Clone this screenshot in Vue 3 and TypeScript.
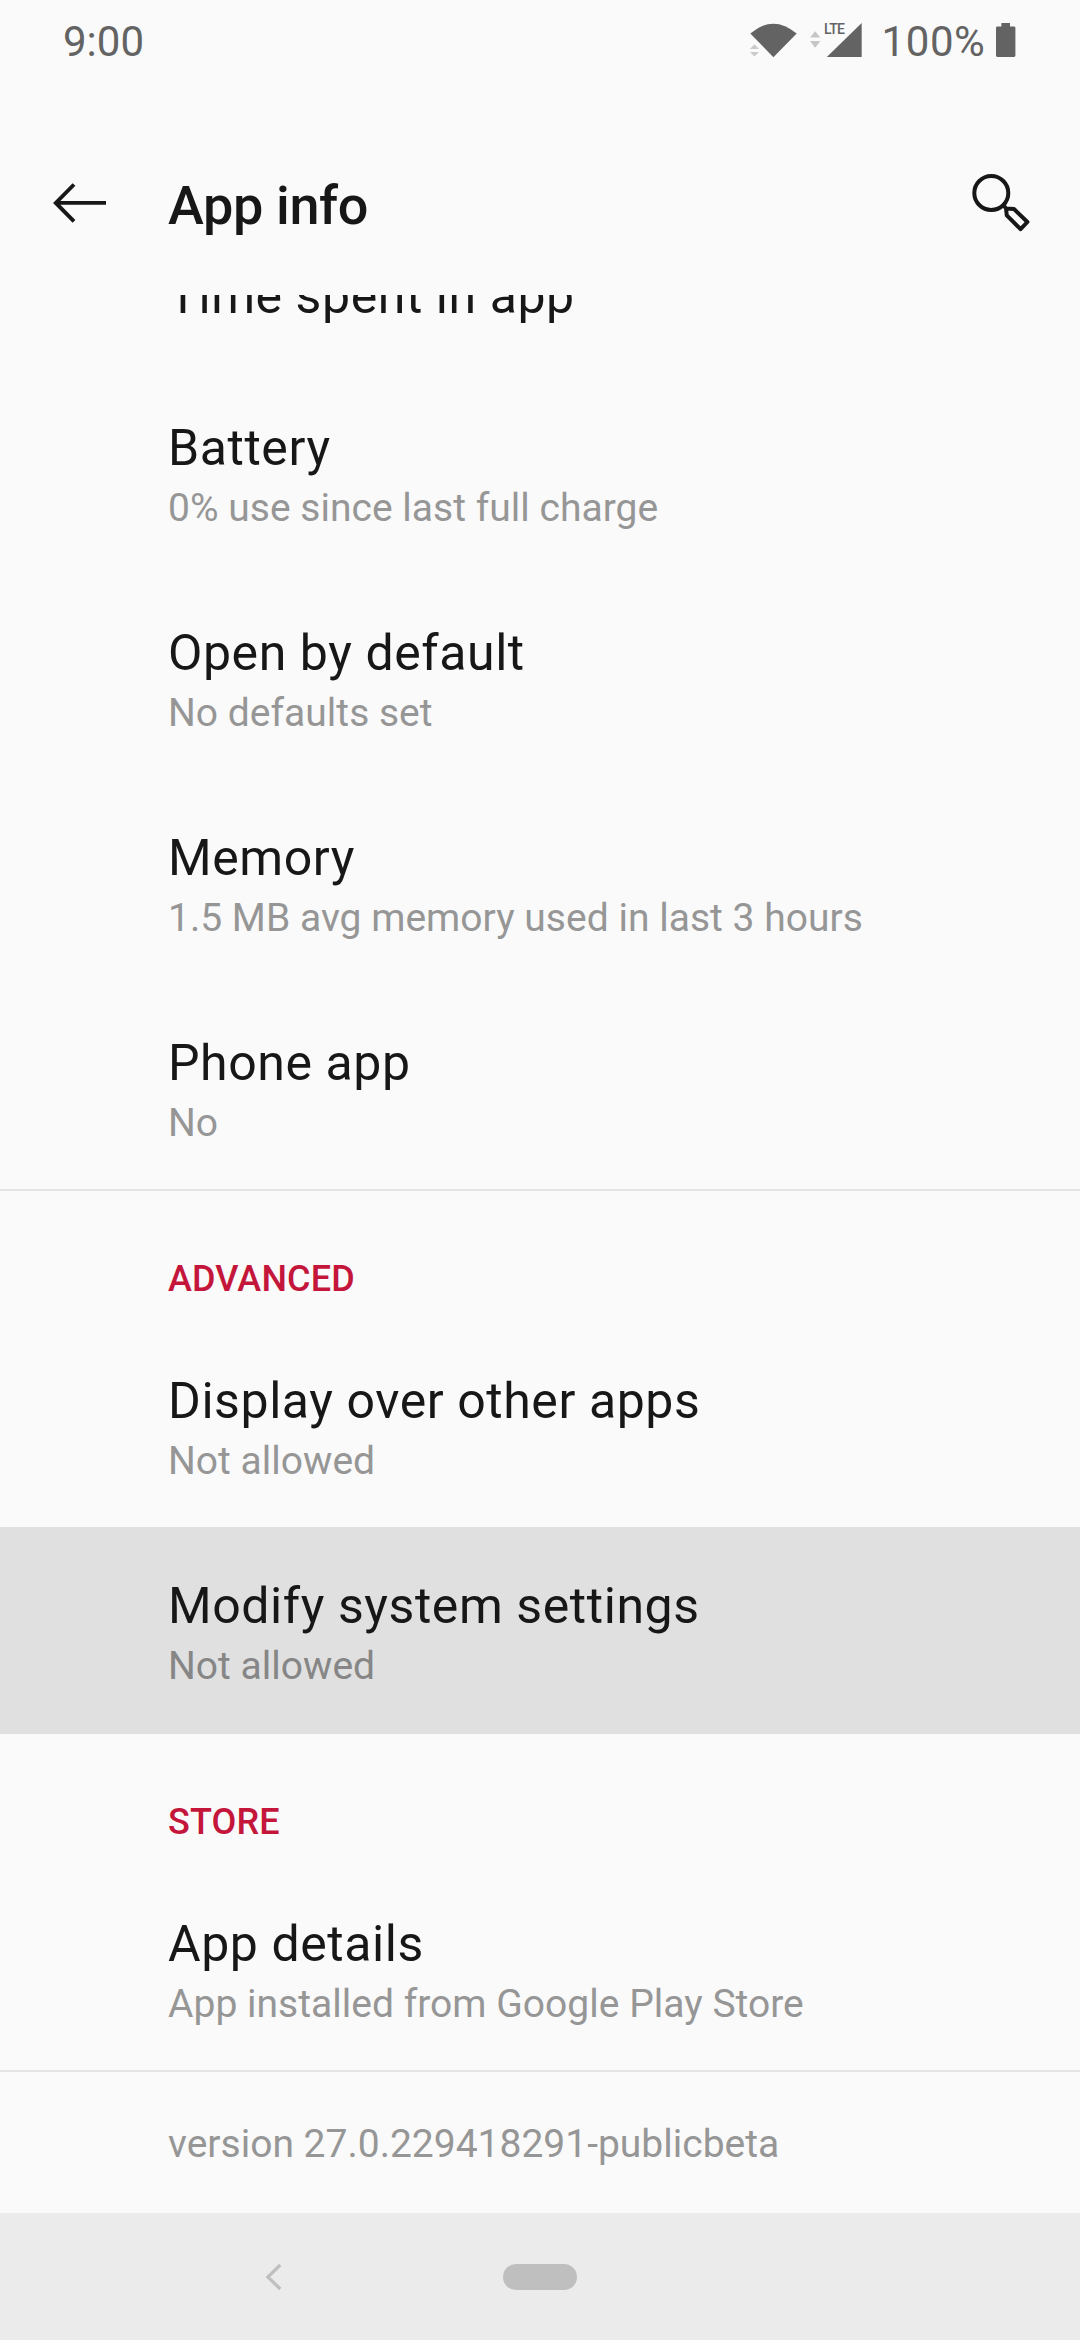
<script setup lang="ts">
interface Preference {
  title: string
  summary?: string
  pressed?: boolean
}
interface Section {
  heading?: string
  items: Preference[]
}

const sections: Section[] = [
  {
    items: [
      { title: 'Time spent in app' },
      { title: 'Battery', summary: '0% use since last full charge' },
      { title: 'Open by default', summary: 'No defaults set' },
      { title: 'Memory', summary: '1.5 MB avg memory used in last 3 hours' },
      { title: 'Phone app', summary: 'No' },
    ],
  },
  {
    heading: 'ADVANCED',
    items: [
      { title: 'Display over other apps', summary: 'Not allowed' },
      { title: 'Modify system settings', summary: 'Not allowed', pressed: true },
    ],
  },
  {
    heading: 'STORE',
    items: [{ title: 'App details', summary: 'App installed from Google Play Store' }],
  },
]

const version = 'version 27.0.229418291-publicbeta'
</script>

<template>
  <div class="screen">
    <div class="status">
      <span class="clock">9:00</span>
      <div class="indicators">
        <svg class="wifi" width="48" height="40" viewBox="750 20 48 40">
          <path d="M750.3 33.5Q773.3 13.8 796.7 33.5L773.4 57.2Z" fill="#636363" />
          <path d="M750 49L754.4 44.3L759 49ZM750 52L759 52L754.4 56.5Z" fill="#cbcbcb" />
        </svg>
        <svg class="signal" width="53" height="40" viewBox="809 20 53 40">
          <path d="M810 37.4L815.2 31.2L820.4 37.4ZM810 41L820.4 41L815.2 47.7Z" fill="#c6c6c6" />
          <path d="M861.7 23V57H826.8Z" fill="#636363" />
          <text class="lte" x="823.9" y="33.7">LTE</text>
        </svg>
        <span class="percent">100%</span>
        <svg class="battery" width="20" height="40" viewBox="996 20 20 40">
          <path
            d="M1001.4 23H1010V26.6H1014Q1015.4 26.6 1015.4 28V55.6Q1015.4 57 1014 57H997.4Q996 57 996 55.6V28Q996 26.6 997.4 26.6H1001.4Z"
            fill="#636363"
          />
        </svg>
      </div>
    </div>

    <header class="toolbar">
      <svg class="back" width="56" height="44" viewBox="52 181.5 56 44">
        <path d="M106 203.4H56M74 185L55.8 203.4L74 221.8" fill="none" stroke="#171717" stroke-width="3.9" />
      </svg>
      <h1>App info</h1>
      <svg class="search" width="64" height="64" viewBox="970 171 64 64">
        <g fill="none" stroke="#171717" stroke-width="4">
          <circle cx="991.3" cy="193" r="17" />
          <path d="M1003.6 205.2L1006 208.4L1014 209L1027.4 222L1020.6 229.2L1006.8 215.4L1006 208.4" stroke-linejoin="round" />
        </g>
      </svg>
    </header>

    <main class="list">
      <section v-for="(section, i) in sections" :key="i" class="section">
        <h2 v-if="section.heading">{{ section.heading }}</h2>
        <div
          v-for="item in section.items"
          :key="item.title"
          class="row"
          :class="{ pressed: item.pressed, single: !item.summary }"
        >
          <div class="title">{{ item.title }}</div>
          <div v-if="item.summary" class="summary">{{ item.summary }}</div>
        </div>
      </section>
      <div class="version">{{ version }}</div>
    </main>

    <nav class="navbar">
      <div class="slot">
        <svg width="20" height="30" viewBox="264 2262 20 30">
          <path d="M280.3 2265L267.8 2277L280.3 2289" fill="none" stroke="#bfbfbf" stroke-width="3.2" />
        </svg>
      </div>
      <div class="pill"></div>
      <div class="slot"></div>
    </nav>
  </div>
</template>

<style>
body {
  margin: 0;
  background: #fafafa;
}
</style>

<style scoped>
.screen {
  display: flex;
  flex-direction: column;
  width: 1080px;
  height: 2340px;
  overflow: hidden;
  background: #fafafa;
  color: #171717;
  font-family: Roboto, 'Noto Sans', sans-serif;
}
.status {
  display: flex;
  flex: none;
  justify-content: space-between;
  box-sizing: border-box;
  height: 120px;
  padding: 17px 64px 0 63px;
  color: #636363;
  font-size: 42px;
  line-height: 49px;
}
.indicators {
  display: flex;
  width: 266px;
}
.indicators svg {
  flex: none;
  margin-top: 3px;
}
.signal {
  margin-left: 11px;
}
.lte {
  fill: #636363;
  font-size: 14px;
  font-weight: 500;
  letter-spacing: -0.6px;
}
.percent {
  margin-left: 19.5px;
  letter-spacing: 0.6px;
}
.battery {
  margin-left: auto;
}
.toolbar {
  display: flex;
  flex: none;
  align-items: center;
  box-sizing: border-box;
  height: 175px;
  padding: 0 46px 9px 52px;
}
h1 {
  flex: 1;
  margin: 0;
  padding: 5px 0 0 60px;
  font-size: 54px;
  font-weight: 500;
  line-height: 64px;
  letter-spacing: -0.36px;
}
.list {
  flex: 1;
  min-height: 0;
  overflow: hidden;
}
.section {
  border-bottom: 2px solid #e4e4e4;
}
.section:has(.pressed) {
  border-color: #e0e0e0;
}
h2 {
  height: 42px;
  margin: 0;
  padding: 67px 0 22px 168px;
  color: #c4163b;
  font-size: 36px;
  font-weight: 500;
  line-height: 42px;
  letter-spacing: 0.15px;
}
.row {
  box-sizing: border-box;
  height: 205px;
  padding: 49px 0 0 168px;
}
.row.single {
  height: 103px;
  margin-top: -29px;
  padding-top: 0;
}
.title {
  font-size: 50px;
  line-height: 60px;
  letter-spacing: 0.57px;
}
.summary {
  margin-top: 7px;
  color: #969696;
  font-size: 39px;
  line-height: 46px;
  letter-spacing: 0.02px;
}
.pressed {
  background: #e0e0e0;
}
.pressed .summary {
  color: #868686;
}
.version {
  padding: 49px 0 0 168px;
  color: #969696;
  font-size: 39px;
  line-height: 46px;
}
.navbar {
  display: flex;
  flex: none;
  align-items: center;
  height: 127px;
  background: #ebebeb;
}
.slot {
  display: flex;
  flex: 1;
  box-sizing: border-box;
  padding-left: 264px;
}
.pill {
  width: 74px;
  height: 26px;
  border-radius: 13px;
  background: #bfbfbf;
}
</style>
